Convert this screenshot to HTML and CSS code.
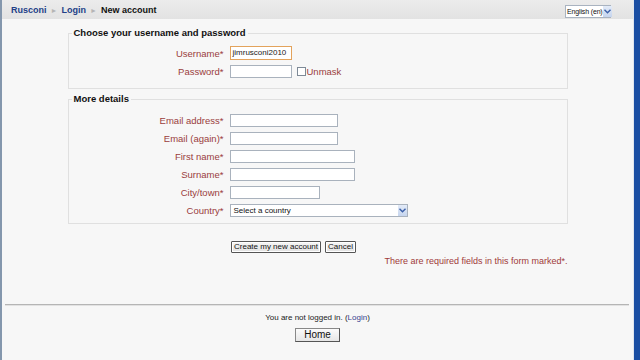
FILE: index.html
```html
<!DOCTYPE html>
<html>
<head>
<meta charset="utf-8">
<link rel="stylesheet" href="styles.css">
</head>
<body>
<div class="window">
  <div class="page">
    <div class="header">
      <div class="crumbs">
        <a class="crumb-link">Rusconi</a><span class="sep">&#9658;</span><a class="crumb-link">Login</a><span class="sep">&#9658;</span><span class="crumb-here">New account</span>
      </div>
      <div class="lang">
        <span class="lang-text">English (en)</span>
        <span class="drop"><svg width="7" height="5" viewBox="0 0 7 5"><path d="M0.5 0.8 L3.5 3.8 L6.5 0.8" fill="none" stroke="#3a5fa8" stroke-width="1.4"/></svg></span>
      </div>
    </div>
    <div class="main">
      <fieldset class="group">
        <legend class="legend">Choose your username and password</legend>
        <div class="row"><span class="label">Username*</span><span class="input focus w62">jimrusconi2010</span></div>
        <div class="row"><span class="label">Password*</span><span class="input w62"></span><span class="check"></span><span class="unmask">Unmask</span></div>
      </fieldset>
      <fieldset class="group second">
        <legend class="legend">More details</legend>
        <div class="row"><span class="label">Email address*</span><span class="input w108"></span></div>
        <div class="row"><span class="label">Email (again)*</span><span class="input w108"></span></div>
        <div class="row"><span class="label">First name*</span><span class="input w125"></span></div>
        <div class="row"><span class="label">Surname*</span><span class="input w125"></span></div>
        <div class="row"><span class="label">City/town*</span><span class="input w90"></span></div>
        <div class="row"><span class="label">Country*</span><span class="select"><span class="select-text">Select a country</span><span class="drop"><svg width="7" height="5" viewBox="0 0 7 5"><path d="M0.5 0.8 L3.5 3.8 L6.5 0.8" fill="none" stroke="#3a5fa8" stroke-width="1.4"/></svg></span></span></div>
      </fieldset>
      <div class="buttons">
        <span class="btn">Create my new account</span><span class="btn">Cancel</span>
      </div>
      <div class="required">There are required fields in this form marked*.</div>
    </div>
    <div class="footer">
      <div class="rule"></div>
      <div class="login-info">You are not logged in. (<a class="footlink">Login</a>)</div>
      <div class="home-wrap"><span class="home">Home</span></div>
    </div>
  </div>
  <div class="scrollbar"></div>
</div>
</body>
</html>
```
FILE: styles.css
```css
html, body {
  margin: 0;
  padding: 0;
}
body {
  width: 640px;
  height: 360px;
  overflow: hidden;
  font-family: "Liberation Sans", Arial, sans-serif;
  font-size: 10px;
  color: #000;
  background: #f7f7f7;
}
.window {
  display: flex;
  height: 360px;
}
.page {
  flex: 1;
  display: flex;
  flex-direction: column;
  border-left: 2px solid #8497ad;
  background: #f7f7f7;
}
.scrollbar {
  width: 6px;
  background: #1a4ea3;
  border-left: 1px solid #dfe6ef;
}
.header {
  height: 19px;
  display: flex;
  align-items: center;
  justify-content: space-between;
  background: linear-gradient(#ececec, #e2e2e2);
  padding: 0 22px 0 9px;
}
.crumbs {
  font-weight: bold;
  font-size: 9px;
  display: flex;
  align-items: center;
  padding-top: 1px;
}
.crumb-link {
  color: #223f88;
}
.crumb-here {
  color: #111;
}
.sep {
  color: #b5b5b5;
  font-size: 7px;
  margin: 0 4px;
}
.lang {
  display: flex;
  align-items: center;
  height: 13px;
  width: 46px;
  border: 1px solid #a9b3c0;
  background: #fff;
  margin-top: 4px;
  box-sizing: border-box;
}
.lang-text {
  flex: 1;
  font-size: 7px;
  letter-spacing: -0.15px;
  padding-left: 1px;
  white-space: nowrap;
  color: #111;
}
.drop {
  width: 9px;
  height: 11px;
  flex: none;
  background: linear-gradient(#e3ebf8, #c6d5ee);
  display: flex;
  align-items: center;
  justify-content: center;
}
.main {
  padding-top: 8px;
}
.group {
  width: 500px;
  box-sizing: border-box;
  margin: 0 auto;
  border: 1px solid #e0e0e0;
  padding: 5px 0 8px 0;
}
.group.second {
  margin-top: 4px;
  padding: 6px 0 4px 0;
}
.legend {
  font-weight: bold;
  font-size: 9.5px;
  line-height: 12px;
  padding: 0 2px;
  margin-left: 3px;
  color: #111;
}
.row {
  display: flex;
  align-items: center;
  height: 18px;
}
.label {
  width: 155px;
  margin-right: 6px;
  text-align: right;
  color: #9a3d3d;
  font-size: 9.5px;
}
.input {
  height: 13px;
  box-sizing: border-box;
  border: 1px solid #a9b2bd;
  background: #fff;
  font-size: 8px;
  line-height: 11px;
  padding-left: 2px;
  color: #222;
  white-space: nowrap;
  overflow: hidden;
}
.focus {
  border-color: #e3a35c;
  height: 14px;
  line-height: 12px;
}
.w62 { width: 62px; }
.w108 { width: 108px; }
.w125 { width: 125px; }
.w90 { width: 90px; }
.check {
  width: 7px;
  height: 7px;
  border: 1px solid #7e8a97;
  background: #fff;
  margin-left: 5px;
}
.unmask {
  color: #9a3d3d;
  margin-left: 1px;
  font-size: 9.5px;
}
.select {
  width: 178px;
  height: 13px;
  box-sizing: border-box;
  border: 1px solid #a9b2bd;
  background: #fff;
  display: flex;
  align-items: center;
}
.select-text {
  flex: 1;
  font-size: 8px;
  padding-left: 3px;
  color: #111;
}
.buttons {
  display: flex;
  margin: 17px 0 0 229px;
  gap: 4px;
}
.btn {
  height: 12px;
  box-sizing: border-box;
  line-height: 10px;
  font-size: 8px;
  padding: 0 2px;
  border: 1px solid #555;
  border-radius: 1px;
  background: linear-gradient(#f6f6f6, #e2e2e2);
  box-shadow: inset 0 0 0 1px #fff;
  color: #111;
}
.required {
  width: 500px;
  margin: 2px auto 0;
  text-align: right;
  color: #a03a3a;
  font-size: 9px;
  line-height: 12px;
}
.footer {
  margin-top: 37px;
}
.rule {
  height: 1px;
  margin: 0 4px 0 3px;
  background: #b5b5b5;
  border-bottom: 1px solid #e2e2e2;
}
.login-info {
  text-align: center;
  font-size: 8px;
  margin-top: 6px;
  line-height: 12px;
  color: #222;
}
.footlink {
  color: #3a3f8f;
}
.home-wrap {
  display: flex;
  justify-content: center;
  margin-top: 4px;
}
.home {
  width: 45px;
  height: 14px;
  box-sizing: border-box;
  text-align: center;
  font-size: 10px;
  line-height: 12px;
  border: 1px solid #888;
  border-right-color: #555;
  border-bottom-color: #555;
  background: linear-gradient(#fbfbfb, #e6e6e6);
  color: #111;
}
```
